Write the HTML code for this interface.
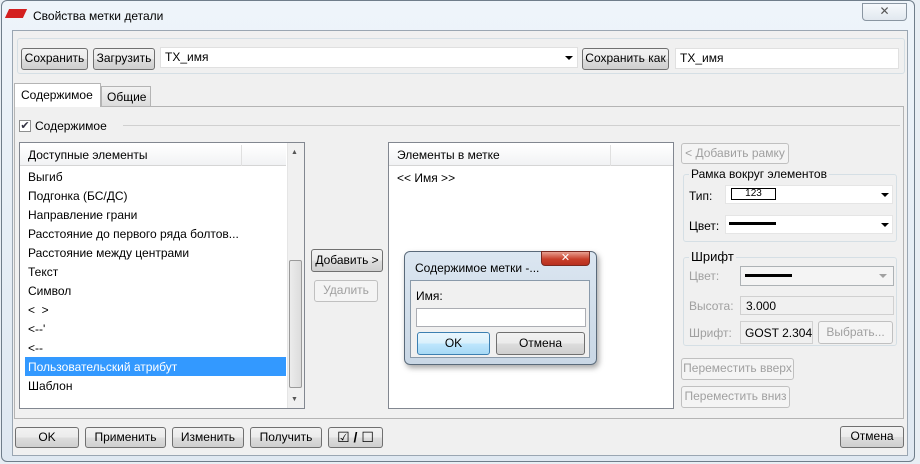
<!DOCTYPE html>
<html><head><meta charset="utf-8"><style>
*{box-sizing:border-box;margin:0;padding:0}
body{width:920px;height:464px;overflow:hidden;background:#e8eef4;font-family:"Liberation Sans","DejaVu Sans",sans-serif;font-size:12px;color:#000;position:relative}
.a{position:absolute}
.btn{position:absolute;border:1px solid #707070;border-radius:3px;background:linear-gradient(#f2f2f2,#ebebeb 50%,#dddddd 51%,#cfcfcf);text-align:center;font-size:12px;line-height:19px;white-space:nowrap}
.dis{border-color:#c0c0c0;background:#f4f4f4;color:#a0a0a0}
.inp{position:absolute;background:#fff;border:1px solid #c5c9ce;padding-left:4px;line-height:18px}
.grp{position:absolute;border:1px solid #d5dfe5;border-radius:3px}
.lbl{position:absolute;background:#f0f0f0;padding:0 2px}
.arr{position:absolute;width:0;height:0;border-left:4px solid transparent;border-right:4px solid transparent;border-top:4px solid #000}
.item{position:absolute;left:28px;font-size:12px;white-space:nowrap}
</style></head><body>
<!-- window frame -->
<div class="a" style="left:1px;top:0;width:914px;height:462px;border:1px solid #6f7d8a;border-radius:6px;background:linear-gradient(#eef4fa,#dfe8f1)"></div>
<div class="a" style="left:7px;top:9px;width:18px;height:9px;background:#d42020;transform:skewX(-25deg)"></div>
<div class="a" style="left:33px;top:9px;font-size:12px">Свойства метки детали</div>
<div class="a" style="left:862px;top:3px;width:45px;height:18px;border:1px solid #8a96a2;border-radius:0 0 4px 4px;background:linear-gradient(#f6f9fc,#e1e8ef);text-align:center;font-size:12px;color:#555;line-height:15px">✕</div>
<!-- content -->
<div class="a" style="left:12px;top:30px;width:896px;height:426px;background:#f0f0f0;border:1px solid #9aa6b2"></div>
<div class="grp" style="left:17px;top:38px;width:888px;height:36px"></div>
<div class="btn" style="left:21px;top:48px;width:67px;height:22px">Сохранить</div>
<div class="btn" style="left:93px;top:48px;width:62px;height:22px">Загрузить</div>
<div class="inp" style="left:160px;top:47px;width:418px;height:21px;border-color:#e0e0e0">TX_имя</div>
<div class="arr" style="left:565px;top:56px"></div>
<div class="btn" style="left:582px;top:48px;width:87px;height:22px">Сохранить как</div>
<div class="inp" style="left:675px;top:48px;width:224px;height:21px;border-color:#e0e0e0">TX_имя</div>
<!-- tabs -->
<div class="a" style="left:14px;top:106px;width:890px;height:313px;border:1px solid #b4b4b4;background:#f0f0f0"></div>
<div class="a" style="left:14px;top:83px;width:87px;height:24px;border:1px solid #b4b4b4;border-bottom:none;background:#fff;padding:4px 0 0 6px">Содержимое</div>
<div class="a" style="left:101px;top:86px;width:50px;height:20px;border:1px solid #b4b4b4;border-bottom:none;background:linear-gradient(#f2f2f2,#dcdcdc);padding:3px 0 0 5px">Общие</div>
<div class="a" style="left:19px;top:120px;width:12px;height:12px;border:1px solid #8e8f8f;background:#fff;font-size:11px;line-height:10px;text-align:center;color:#334">✔</div>
<div class="a" style="left:35px;top:119px">Содержимое</div>
<div class="a" style="left:123px;top:125px;width:777px;height:1px;background:#d0d0d0"></div>
<!-- left list -->
<div class="a" style="left:19px;top:142px;width:286px;height:267px;border:1px solid #828790;background:#fff"></div>
<div class="a" style="left:20px;top:145px;width:266px;height:21px;background:linear-gradient(#fff,#f1f2f4);border-bottom:1px solid #d5d5d5;padding:3px 0 0 8px">Доступные элементы</div>
<div class="a" style="left:241px;top:145px;width:1px;height:21px;background:#e0e0e0"></div>
<div class="a" style="left:287px;top:143px;width:17px;height:265px;background:#f0f0f0;border-left:1px solid #e5e5e5"></div>
<div class="a" style="left:289px;top:260px;width:13px;height:128px;border:1px solid #9a9a9a;border-radius:2px;background:linear-gradient(90deg,#ececec,#dcdcdc)"></div>
<div class="a" style="left:291px;top:149px;font-size:7px;color:#555">▲</div>
<div class="a" style="left:291px;top:396px;font-size:7px;color:#555">▼</div>
<div class="item" style="top:170px">Выгиб</div>
<div class="item" style="top:189px">Подгонка (БС/ДС)</div>
<div class="item" style="top:208px">Направление грани</div>
<div class="item" style="top:227px">Расстояние до первого ряда болтов...</div>
<div class="item" style="top:246px">Расстояние между центрами</div>
<div class="item" style="top:265px">Текст</div>
<div class="item" style="top:284px">Символ</div>
<div class="item" style="top:303px">&lt;&nbsp;&nbsp;&gt;</div>
<div class="item" style="top:322px">&lt;--'</div>
<div class="item" style="top:341px">&lt;--</div>
<div class="a" style="left:25px;top:357px;width:261px;height:19px;background:#3399ff"></div>
<div class="item" style="top:360px;color:#fff">Пользовательский атрибут</div>
<div class="item" style="top:379px">Шаблон</div>
<!-- middle buttons -->
<div class="btn" style="left:311px;top:249px;width:72px;height:23px;line-height:21px">Добавить &gt;</div>
<div class="btn dis" style="left:314px;top:280px;width:64px;height:22px">Удалить</div>
<!-- right list -->
<div class="a" style="left:388px;top:142px;width:286px;height:267px;border:1px solid #828790;background:#fff"></div>
<div class="a" style="left:389px;top:145px;width:284px;height:21px;background:linear-gradient(#fff,#f1f2f4);border-bottom:1px solid #d5d5d5;padding:3px 0 0 8px">Элементы в метке</div>
<div class="a" style="left:610px;top:145px;width:1px;height:21px;background:#e0e0e0"></div>
<div class="a" style="left:397px;top:171px">&lt;&lt; Имя &gt;&gt;</div>
<!-- right panel -->
<div class="btn dis" style="left:681px;top:143px;width:108px;height:21px">&lt; Добавить рамку</div>
<div class="grp" style="left:683px;top:174px;width:214px;height:68px"></div>
<div class="lbl" style="left:689px;top:167px">Рамка вокруг элементов</div>
<div class="a" style="left:689px;top:189px">Тип:</div>
<div class="inp" style="left:725px;top:185px;width:168px;height:19px;border-color:#e5e5e5"></div>
<div class="a" style="left:731px;top:188px;width:45px;height:12px;border:1px solid #000;font-size:10px;line-height:9px;text-align:center">123</div>
<div class="arr" style="left:881px;top:193px"></div>
<div class="a" style="left:689px;top:219px">Цвет:</div>
<div class="inp" style="left:725px;top:215px;width:168px;height:19px;border-color:#e5e5e5"></div>
<div class="a" style="left:729px;top:222px;width:47px;height:3px;background:#000"></div>
<div class="arr" style="left:881px;top:223px"></div>
<div class="grp" style="left:683px;top:257px;width:214px;height:89px"></div>
<div class="lbl" style="left:689px;top:249px;font-size:13px">Шрифт</div>
<div class="a" style="left:689px;top:269px;color:#a0a0a0">Цвет:</div>
<div class="a" style="left:740px;top:266px;width:154px;height:20px;border:1px solid #adb2b5;background:#f4f4f4"></div>
<div class="a" style="left:745px;top:274px;width:47px;height:3px;background:#000"></div>
<div class="arr" style="left:879px;top:274px;border-top-color:#a0a0a0"></div>
<div class="a" style="left:689px;top:299px;color:#a0a0a0">Высота:</div>
<div class="a" style="left:740px;top:296px;width:154px;height:19px;border:1px solid #d0d0d0;background:#f0f0f0;padding:2px 0 0 5px">3.000</div>
<div class="a" style="left:689px;top:326px;color:#a0a0a0">Шрифт:</div>
<div class="a" style="left:740px;top:321px;width:73px;height:23px;border:1px solid #d0d0d0;background:#f0f0f0;padding:4px 0 0 4px;overflow:hidden;white-space:nowrap">GOST 2.304 t</div>
<div class="btn dis" style="left:818px;top:321px;width:75px;height:23px;line-height:21px">Выбрать...</div>
<div class="btn dis" style="left:681px;top:358px;width:113px;height:22px">Переместить вверх</div>
<div class="btn dis" style="left:681px;top:386px;width:109px;height:22px">Переместить вниз</div>
<!-- bottom -->
<div class="btn" style="left:15px;top:427px;width:64px;height:21px">OK</div>
<div class="btn" style="left:85px;top:427px;width:81px;height:21px">Применить</div>
<div class="btn" style="left:172px;top:427px;width:72px;height:21px">Изменить</div>
<div class="btn" style="left:250px;top:427px;width:72px;height:21px">Получить</div>
<div class="btn" style="left:328px;top:427px;width:55px;height:21px;font-weight:bold;font-size:14px;line-height:18px">☑ / ☐</div>
<div class="btn" style="left:840px;top:426px;width:64px;height:22px">Отмена</div>
<!-- modal -->
<div class="a" style="left:404px;top:251px;width:193px;height:114px;border:1px solid #5a6a7a;border-radius:6px;background:linear-gradient(#dbe6f1,#c9d7e5);box-shadow:2px 3px 6px rgba(0,0,0,.35)"></div>
<div class="a" style="left:415px;top:261px">Содержимое метки -...</div>
<div class="a" style="left:541px;top:251px;width:49px;height:15px;border:1px solid #7a2a20;border-radius:0 0 4px 4px;background:linear-gradient(#e8a090,#c8402a 55%,#b83020);color:#fff;text-align:center;font-size:11px;line-height:13px;font-weight:bold">✕</div>
<div class="a" style="left:410px;top:280px;width:180px;height:78px;background:#f0f0f0;border:1px solid #8a9aaa"></div>
<div class="a" style="left:416px;top:289px">Имя:</div>
<div class="a" style="left:416px;top:308px;width:170px;height:19px;background:#fff;border:1px solid #abadb3"></div>
<div class="btn" style="left:417px;top:332px;width:73px;height:23px;line-height:21px;border-color:#3c7fb1;background:linear-gradient(#eaf6fd,#d9f0fc 50%,#bee6fd 51%,#a7d9f5)">OK</div>
<div class="btn" style="left:496px;top:332px;width:89px;height:23px;line-height:21px">Отмена</div>
</body></html>
